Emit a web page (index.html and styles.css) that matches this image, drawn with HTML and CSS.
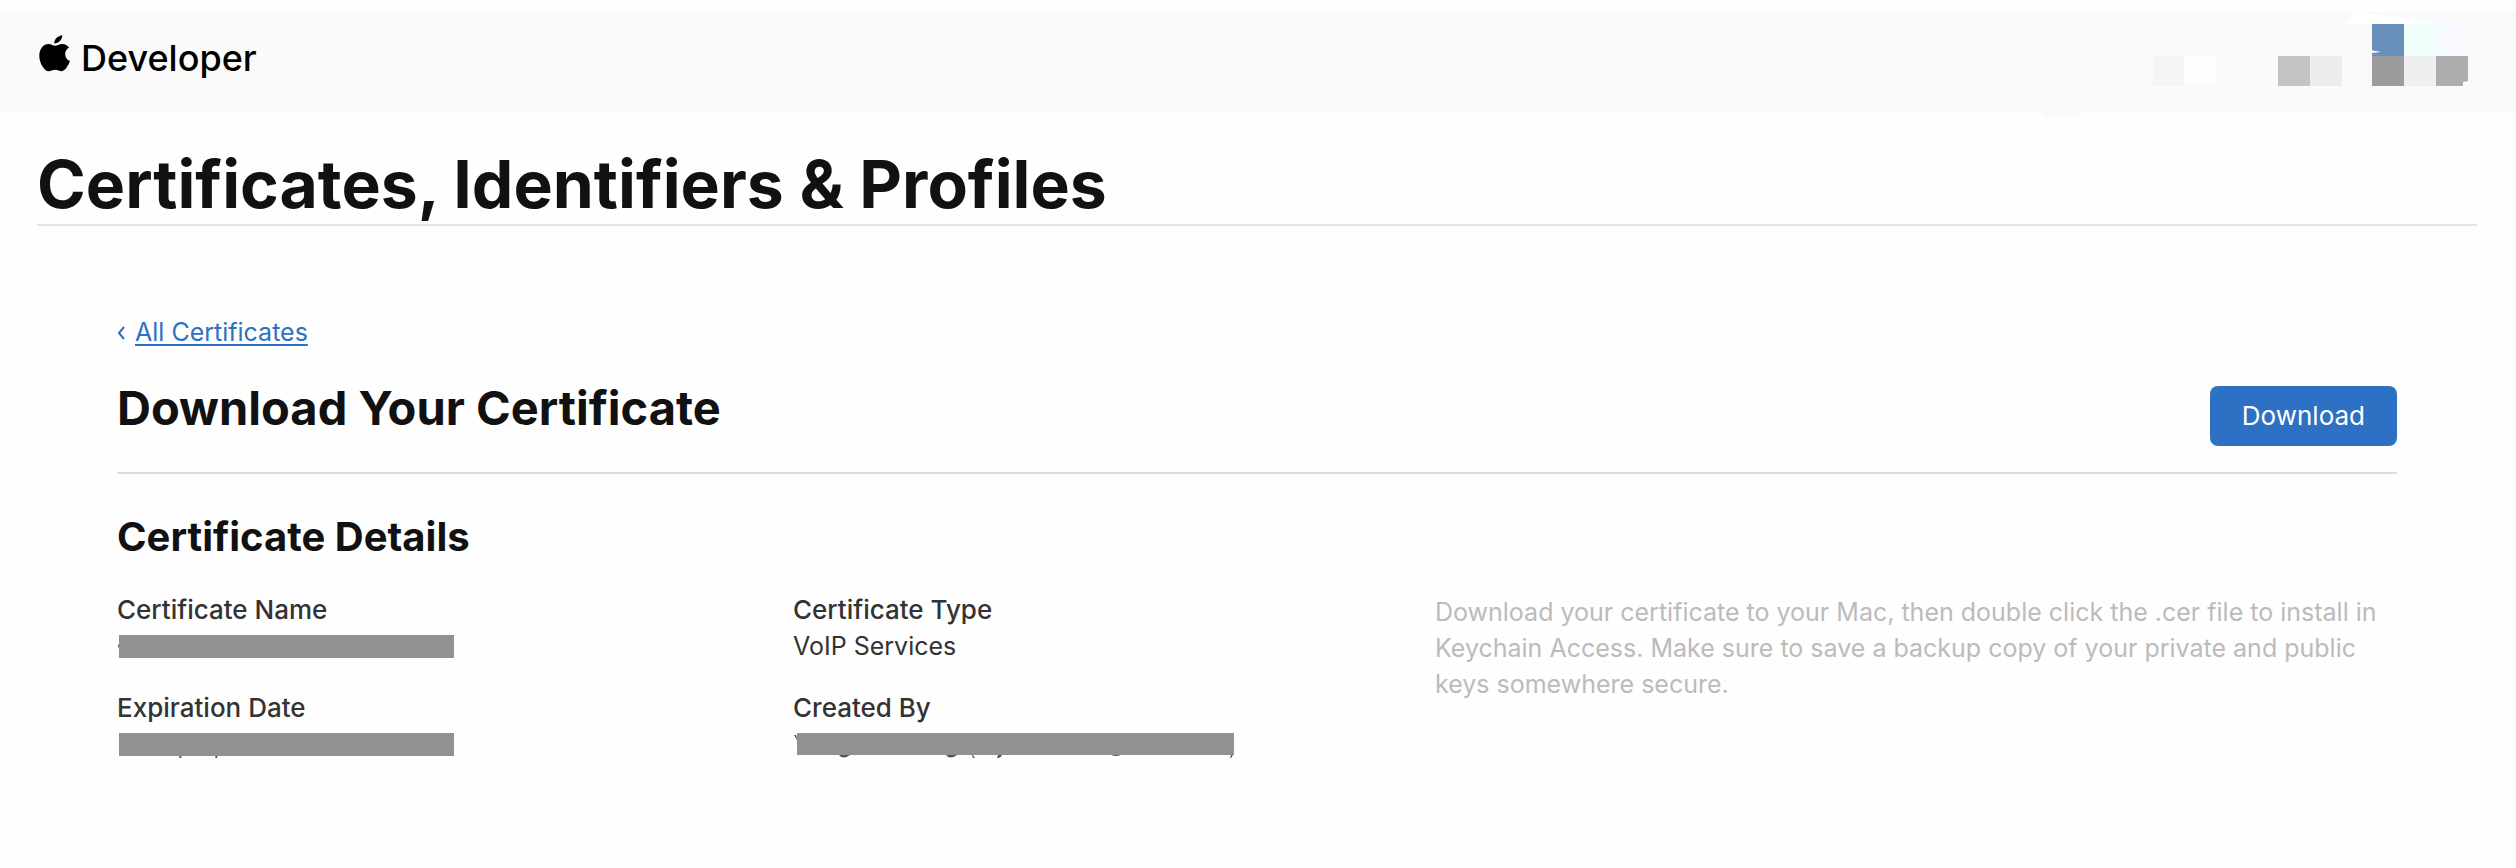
FILE: index.html
```
<!DOCTYPE html>
<html lang="en">
<head>
    <meta charset="UTF-8">
    <meta name="viewport" content="width=device-width, initial-scale=1.0">
    <title>Certificates, Identifiers &amp; Profiles</title>
    <link rel="stylesheet" href="styles.css">
</head>
<body>
    <header class="topbar">
        <a class="brand" href="#">
            <svg class="logo" viewBox="0 0 31 37" width="31" height="37" aria-hidden="true">
                <path d="M23.3 0.2C23.5 4.2 19.8 8.4 15.3 8.4C14.8 4.6 18.9 0.7 23.3 0.2Z"/>
                <path d="M16 10.8C18 10.8 20 9 23.3 9C26 9 28.5 10.3 30 12.5C24.3 16.2 25.3 23.8 31 26.1C29.6 29.8 26.3 36.2 22.7 36.2C20.2 36.2 19 34.7 16.2 34.7C13.3 34.7 12 36.2 9.7 36.2C5.3 36.2 0.3 27.9 0.3 20.9C0.3 13.5 4.6 9 9.5 9C12.3 9 14.3 10.8 16 10.8Z"/>
            </svg>
            <span>Developer</span>
        </a>
        <!-- blurred out account menu -->
        <svg class="account" viewBox="0 0 516 100" width="516" height="100" aria-hidden="true">
            <path fill="#fff" d="M346 12C348 5 354 0 363 1L400 5L436 12Z"/>
            <path fill="#fafafa" d="M39 99C43 102 44 106 49 106L78 104C82 102 85 100 90 100V99Z"/>
            <path fill="#fafafa" d="M164 99Q230 103 300 99Z"/>
            <rect x="372" y="12" width="32" height="32" fill="#698fbb"/>
            <rect x="404" y="12" width="32" height="32" fill="#eefffb"/>
            <rect x="436" y="12" width="32" height="32" fill="#f8faff"/>
            <rect x="122" y="44" width="30" height="30" fill="#f9f9f9"/>
            <rect x="153" y="44" width="31" height="30" fill="#f5f5f5"/>
            <rect x="184" y="44" width="32" height="30" fill="#fdfdfd"/>
            <rect x="216" y="44" width="31" height="30" fill="#f9f9f9"/>
            <rect x="278" y="44" width="32" height="30" fill="#c4c4c4"/>
            <rect x="310" y="44" width="32" height="30" fill="#ececec"/>
            <rect x="342" y="44" width="30" height="30" fill="#f9f9f9"/>
            <rect x="372" y="44" width="32" height="30" fill="#9c9c9c"/>
            <rect x="404" y="44" width="32" height="30" fill="#efefef"/>
            <path fill="#adadad" d="M436 44H468V69L463 70V74H436Z"/>
            <path fill="#fff" d="M370 38L381 40L372 41Z"/>
        </svg>
    </header>

    <h1>Certificates, Identifiers &amp; Profiles</h1>

    <main class="content">
        <div class="back">
            <svg viewBox="0 0 8 16" width="8" height="16" aria-hidden="true">
                <path d="M7 3L2 9L7 15"/>
            </svg>
            <a href="#">All Certificates</a>
        </div>

        <div class="heading">
            <h2>Download Your Certificate</h2>
            <button type="button">Download</button>
        </div>

        <h3>Certificate Details</h3>
        <div class="details">
            <dl>
                <dt>Certificate Name</dt>
                <dd>
                    <svg class="redacted" viewBox="0 0 340 36" width="340" height="36" aria-label="Hidden">
                        <path class="ink" d="M2 16Q0 18 2 20Z"/>
                        <rect x="2" y="7" width="335" height="23"/>
                    </svg>
                </dd>
                <dt>Expiration Date</dt>
                <dd>
                    <svg class="redacted" viewBox="0 0 340 36" width="340" height="36" aria-label="Hidden">
                        <path class="ink" d="M63 29H65L64 32H62ZM99 29H101L100 32H98Z"/>
                        <rect x="2" y="7" width="335" height="23"/>
                    </svg>
                </dd>
            </dl>
            <dl>
                <dt>Certificate Type</dt>
                <dd>VoIP Services</dd>
                <dt>Created By</dt>
                <dd>
                    <svg class="redacted" viewBox="0 0 446 36" width="446" height="36" aria-label="Hidden">
                        <path class="ink" d="M1 9H3L4 12V14ZM46 29Q50 34 57 29ZM153 29Q157 34 164 29ZM179 29H180L182 32H180ZM205 29H209Q208 32 204 32ZM318 29Q323 31 328 29ZM438 29H440L438 32H437Z"/>
                        <rect x="4" y="7" width="437" height="22"/>
                    </svg>
                </dd>
            </dl>
            <p>Download your certificate to your Mac, then double click the .cer file to install in Keychain Access. Make sure to save a backup copy of your private and public keys somewhere secure.</p>
        </div>
    </main>
</body>
</html>
```
FILE: styles.css
```
body {
    font-family: Inter, "Liberation Sans", sans-serif;
    font-size: 25px;
    line-height: 36px;
    margin: 0;
    padding-top: 12px;
    background-color: #fefefe;
    color: #333;
}

h1, h2, h3, p, dl, dd {
    margin: 0;
}

h1, h2, h3 {
    color: #111;
    font-weight: 700;
}

.topbar {
    display: flex;
    justify-content: space-between;
    align-items: flex-start;
    padding-left: 39px;
    background-color: #fafafa;
}

.brand {
    display: flex;
    align-items: flex-start;
    gap: 11px;
    padding-top: 23px;
    font-size: 36px;
    font-weight: 500;
    line-height: 47px;
    color: #000;
    text-decoration: none;
}

.logo {
    fill: #000;
}

.account {
    display: block;
    overflow: visible;
}

h1 {
    margin: 0 39px 0 37px;
    padding-top: 32px;
    font-size: 66px;
    line-height: 80px;
    border-bottom: 2px solid #e4e4e4;
}

.content {
    padding: 88px 119px 0 117px;
}

.back {
    display: flex;
    align-items: center;
    gap: 10px;
    color: #2d70c4;
}

.back svg {
    fill: none;
    stroke: #2d70c4;
    stroke-width: 2;
}

.back a {
    color: #2d70c4;
    text-underline-offset: 3px;
}

.heading {
    display: flex;
    justify-content: space-between;
    align-items: flex-start;
    margin-top: 36px;
    padding-bottom: 26px;
    border-bottom: 2px solid #ddd;
}

h2 {
    font-size: 47px;
    line-height: 43px;
}

button {
    height: 60px;
    padding: 0 32px 2px;
    font-family: inherit;
    font-size: 26px;
    background-color: #2d70c4;
    color: white;
    border: none;
    border-radius: 8px;
    cursor: pointer;
}

h3 {
    margin-top: 39px;
    font-size: 40px;
    line-height: 48px;
}

.details {
    display: grid;
    grid-template-columns: 676fr 642fr 962fr;
    margin-top: 31px;
}

dt {
    font-size: 26px;
    font-weight: 500;
}

dd {
    height: 36px;
}

dd + dt {
    margin-top: 26px;
}

.redacted {
    display: block;
    fill: #919191;
}

.redacted .ink {
    fill: #555;
}

.details p {
    padding-top: 2px;
    color: #bbb;
}
```
